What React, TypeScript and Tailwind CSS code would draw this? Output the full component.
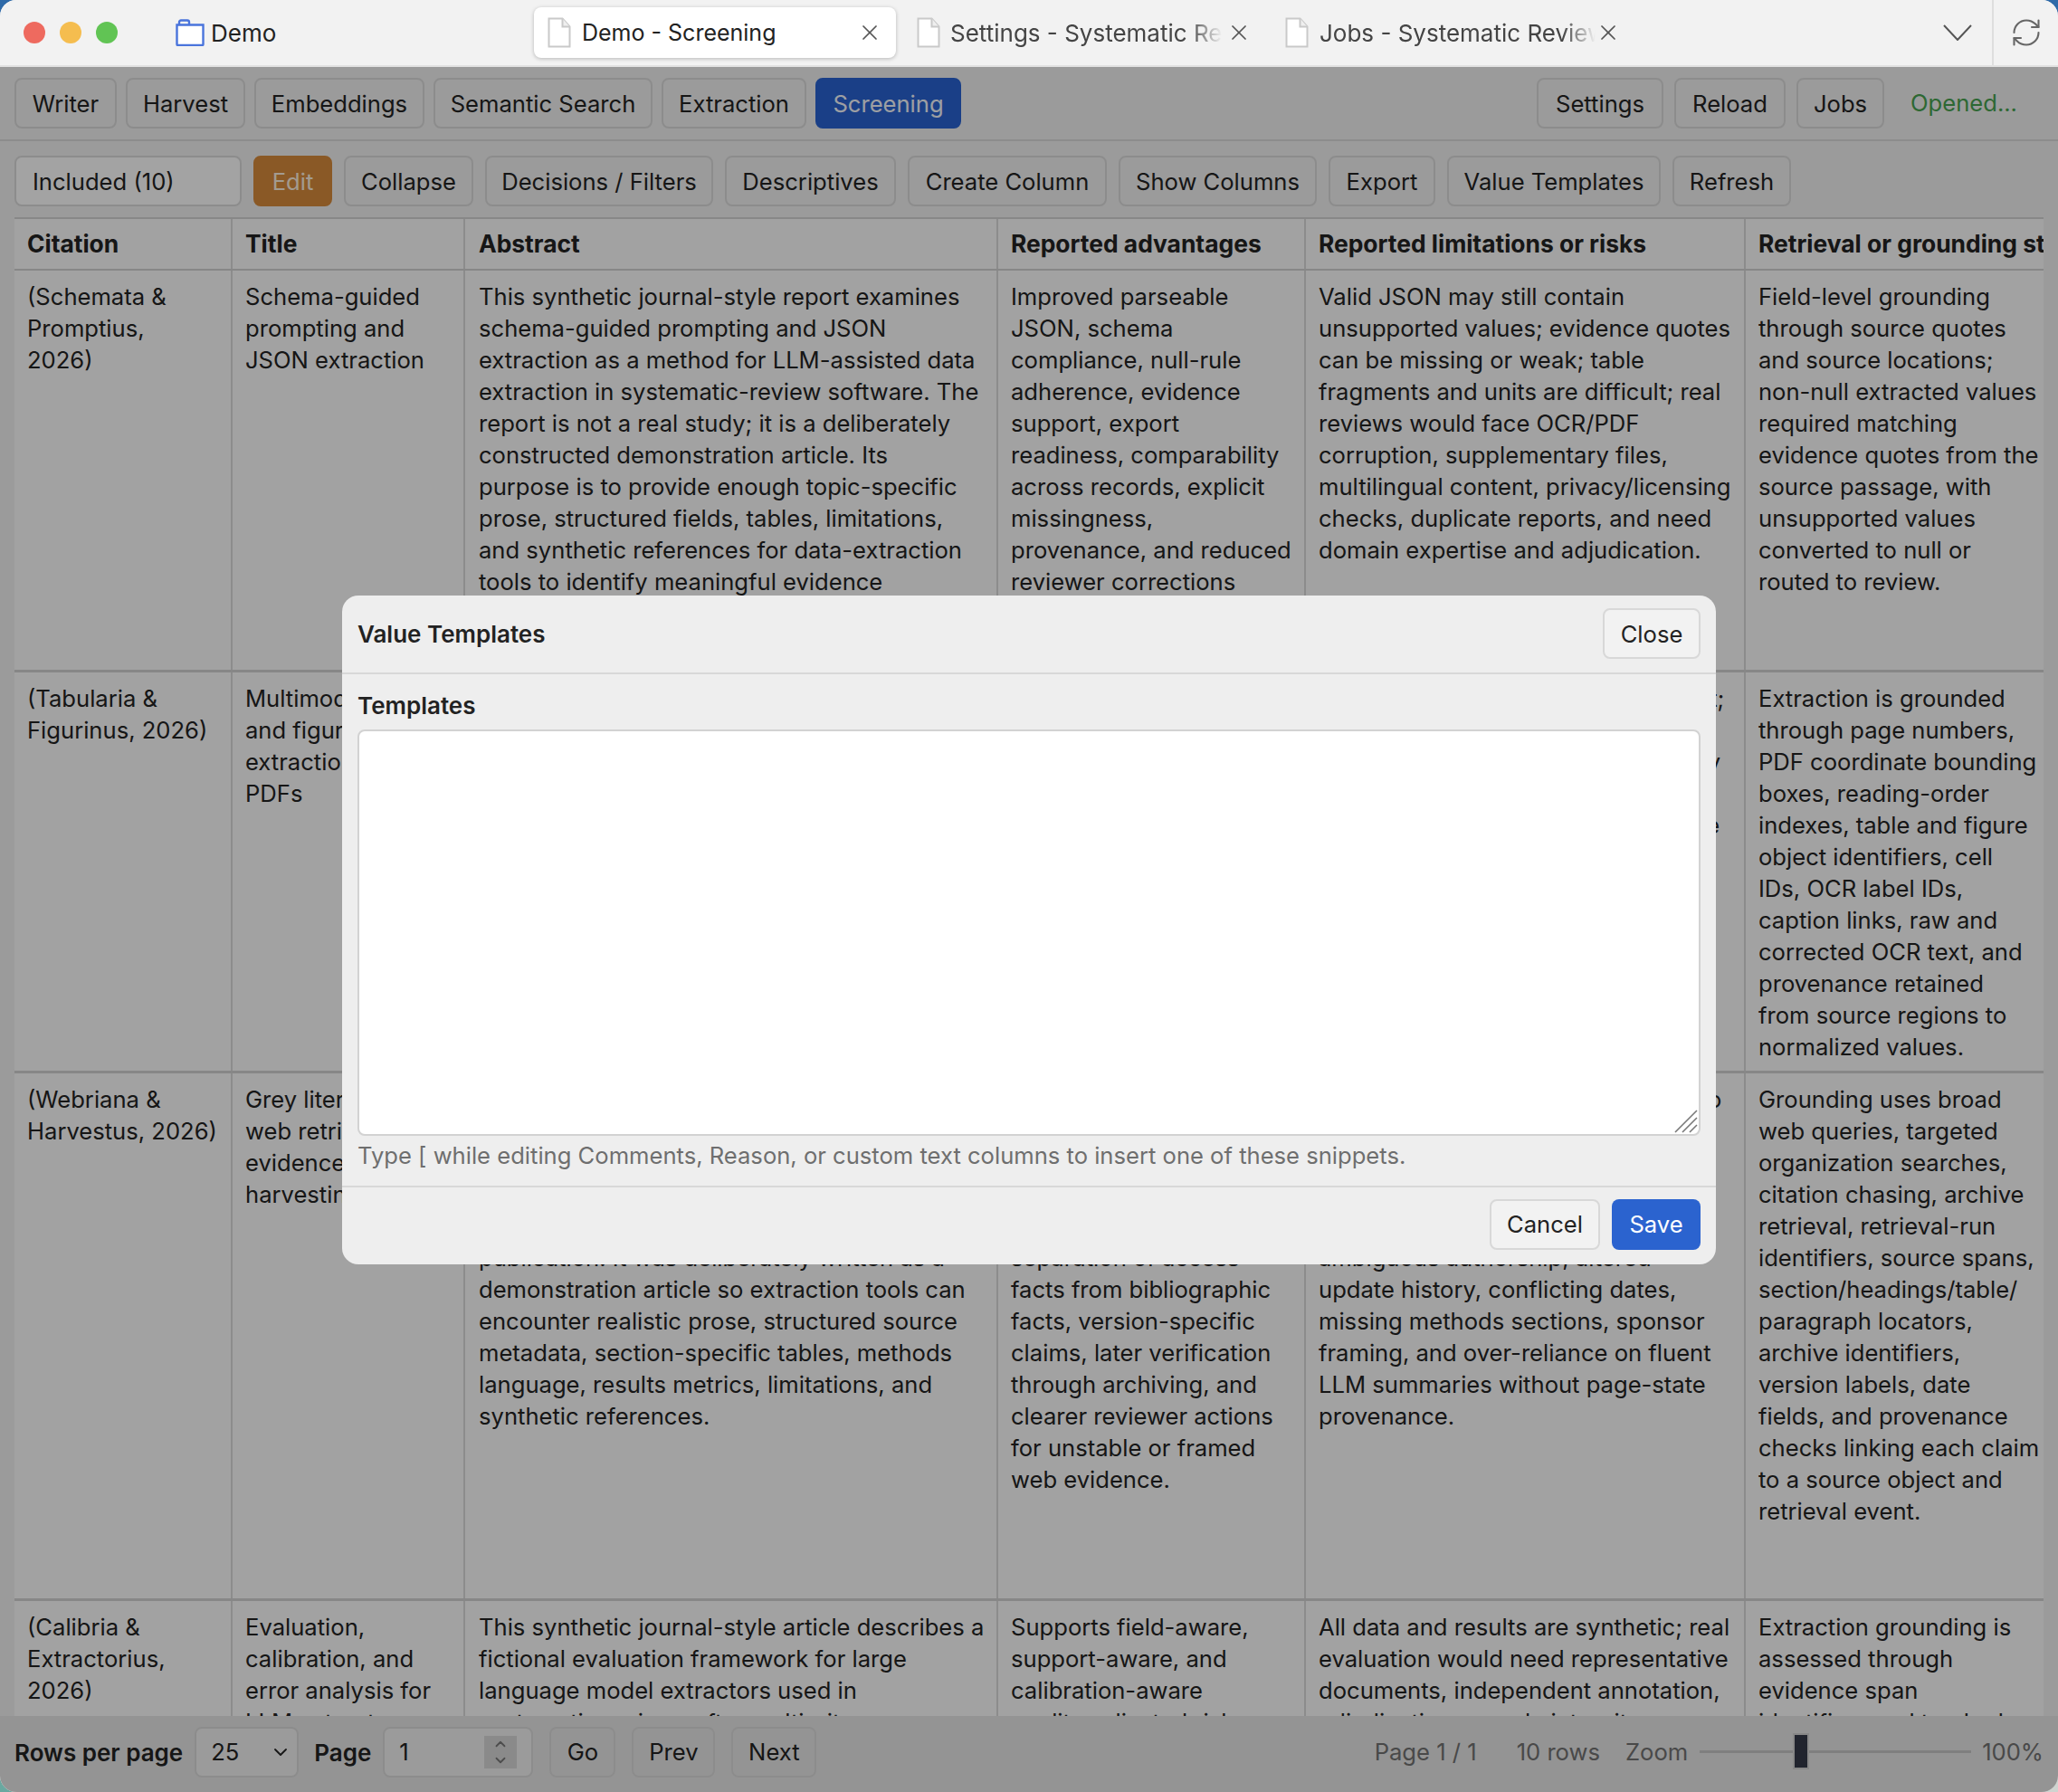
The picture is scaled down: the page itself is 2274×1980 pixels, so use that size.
import React from 'react';
import { RefreshCw, X, ChevronDown, ChevronUp } from 'lucide-react';

const FONT = "font-['Inter','Noto_Sans',sans-serif]";

type CellRow = { height: string; cells: string[] };

const columns = ['Citation', 'Title', 'Abstract', 'Reported advantages', 'Reported limitations or risks', 'Retrieval or grounding strategy'];

const rows: CellRow[] = [
  {
    height: 'h-[444px]',
    cells: [
      '(Schemata &\nPromptius,\n2026)',
      'Schema-guided\nprompting and\nJSON extraction',
      'This synthetic journal-style report examines\nschema-guided prompting and JSON\nextraction as a method for LLM-assisted data\nextraction in systematic-review software. The\nreport is not a real study; it is a deliberately\nconstructed demonstration article. Its\npurpose is to provide enough topic-specific\nprose, structured fields, tables, limitations,\nand synthetic references for data-extraction\ntools to identify meaningful evidence\nspans.',
      'Improved parseable\nJSON, schema\ncompliance, null-rule\nadherence, evidence\nsupport, export\nreadiness, comparability\nacross records, explicit\nmissingness,\nprovenance, and reduced\nreviewer corrections',
      'Valid JSON may still contain\nunsupported values; evidence quotes\ncan be missing or weak; table\nfragments and units are difficult; real\nreviews would face OCR/PDF\ncorruption, supplementary files,\nmultilingual content, privacy/licensing\nchecks, duplicate reports, and need\ndomain expertise and adjudication.',
      'Field-level grounding\nthrough source quotes\nand source locations;\nnon-null extracted values\nrequired matching\nevidence quotes from the\nsource passage, with\nunsupported values\nconverted to null or\nrouted to review.',
    ],
  },
  {
    height: 'h-[443px]',
    cells: [
      '(Tabularia &\nFigurinus, 2026)',
      'Multimodal table\nand figure\nextraction from\nPDFs',
      'This synthetic report examines multimodal\nparsing of tables and figures from PDF\nfiles for evidence extraction in reviews.',
      'Better recovery of table\ncells, figure values and\ncaption links across\nscanned documents',
      'Small figure labels and captions drift;\nmerged cells and OCR noise remain;\nvalues read off charts are only partly\ncorrect, and parsers can disagree;\nreviewers must check each full page',
      'Extraction is grounded\nthrough page numbers,\nPDF coordinate bounding\nboxes, reading-order\nindexes, table and figure\nobject identifiers, cell\nIDs, OCR label IDs,\ncaption links, raw and\ncorrected OCR text, and\nprovenance retained\nfrom source regions to\nnormalized values.',
    ],
  },
  {
    height: 'h-[583px]',
    cells: [
      '(Webriana &\nHarvestus, 2026)',
      'Grey literature,\nweb retrieval, and\nevidence\nharvesting',
      'This synthetic report examines grey literature\nand web retrieval for evidence harvesting in\nsystematic-review software. The report is a\nfictional item and not a real study or an\nofficial document, and it is not a genuine\npublication. It was deliberately written as a\ndemonstration article so extraction tools can\nencounter realistic prose, structured source\nmetadata, section-specific tables, methods\nlanguage, results metrics, limitations, and\nsynthetic references.',
      'Broader coverage of\nunpublished reports,\nfaster discovery, and\nclearer source trails,\nwith better reviewer\nseparation of access\nfacts from bibliographic\nfacts, version-specific\nclaims, later verification\nthrough archiving, and\nclearer reviewer actions\nfor unstable or framed\nweb evidence.',
      'Web sources change and are hard to\nkeep; snapshots are partial or non-\ncanonical versions can be mistaken\nlink rot, paywalls, redirects, and\nmirrored pages with little context,\nambiguous authorship, altered\nupdate history, conflicting dates,\nmissing methods sections, sponsor\nframing, and over-reliance on fluent\nLLM summaries without page-state\nprovenance.',
      'Grounding uses broad\nweb queries, targeted\norganization searches,\ncitation chasing, archive\nretrieval, retrieval-run\nidentifiers, source spans,\nsection/headings/table/\nparagraph locators,\narchive identifiers,\nversion labels, date\nfields, and provenance\nchecks linking each claim\nto a source object and\nretrieval event.',
    ],
  },
  {
    height: 'h-[200px]',
    cells: [
      '(Calibria &\nExtractorius,\n2026)',
      'Evaluation,\ncalibration, and\nerror analysis for\nLLM extractors',
      'This synthetic journal-style article describes a\nfictional evaluation framework for large\nlanguage model extractors used in\nsystematic reviews after multi-site',
      'Supports field-aware,\nsupport-aware, and\ncalibration-aware\nquality-adjusted risk',
      'All data and results are synthetic; real\nevaluation would need representative\ndocuments, independent annotation,\nadjudication, sample integrity',
      'Extraction grounding is\nassessed through\nevidence span\nidentifiers and tracked',
    ],
  },
];

const colWidths = ['w-[241px]', 'w-[257px]', 'w-[589px]', 'w-[340px]', 'w-[486px]', 'w-[340px]'];
const colPadding = ['px-[14px]', 'px-[14px]', 'pl-[15px] pr-[13px]', 'px-[14px]', 'px-[14px]', 'px-[14px]'];

function Btn({ w, children, tone = 'plain' }: { w: string; children: React.ReactNode; tone?: 'plain' | 'blue' | 'orange' }) {
  const toneClass =
    tone === 'blue'
      ? 'bg-[#2862d0] border-[#2862d0] text-[#f2f5fb]'
      : tone === 'orange'
        ? 'bg-[#d5893b] border-[#d5893b] text-[#fbeedd]'
        : 'bg-[#eeeeee] border-[#d8d8d8] text-[#222222]';
  return (
    <button className={`${w} h-14 shrink-0 rounded-lg border-2 pt-[1px] text-[25.6px] leading-none whitespace-nowrap ${toneClass}`}>
      {children}
    </button>
  );
}

function DocIcon() {
  return (
    <svg width="26" height="34" viewBox="0 0 26 34" className="shrink-0">
      <path d="M1.5 1.5h15l8 9v22h-23z" fill="#ffffff" stroke="#c9c9c9" strokeWidth="2" />
      <path d="M16.5 1.5v9h8" fill="#efefef" stroke="#c9c9c9" strokeWidth="2" />
    </svg>
  );
}

function FolderIcon() {
  return (
    <svg width="32" height="30" viewBox="0 0 32 30" className="shrink-0">
      <path d="M1.5 6.5h29v21.5a1 1 0 0 1-1 1h-27a1 1 0 0 1-1-1z" fill="#ffffff" stroke="#4a74dc" strokeWidth="2.4" />
      <path d="M4 6.5v-3a2 2 0 0 1 2-2h7a2 2 0 0 1 2 2v3" fill="none" stroke="#4a74dc" strokeWidth="2.4" />
    </svg>
  );
}

function TitleBar() {
  return (
    <div className="flex h-[74px] shrink-0 items-center border-b-2 border-[#e2e2e2] bg-[#f2f2f2] pl-[26px]">
      <div className="flex gap-4">
        <span className="h-6 w-6 rounded-full bg-[#ee6a5f]" />
        <span className="h-6 w-6 rounded-full bg-[#f5bd4f]" />
        <span className="h-6 w-6 rounded-full bg-[#61c454]" />
      </div>
      <div className="ml-[64px] flex w-[396px] items-center gap-[7px] text-[26px] text-[#222222]">
        <FolderIcon />
        Demo
      </div>
      <div className="flex h-14 w-[400px] items-center rounded-lg bg-white pl-[15px] text-[25px] text-[#222222] shadow-[0_1px_4px_rgba(0,0,0,0.25)]">
        <DocIcon />
        <span className="ml-3 w-[304px] pt-[2px] whitespace-nowrap">Demo - Screening</span>
        <X className="h-7 w-7 text-[#555555]" strokeWidth={1.5} />
      </div>
      <div className="ml-[23px] flex items-center text-[26px] text-[#444444]">
        <DocIcon />
        <span className="ml-[11px] w-[300px] overflow-hidden whitespace-nowrap [mask-image:linear-gradient(to_right,black_88%,transparent)]">
          Settings - Systematic Review
        </span>
        <X className="ml-[5px] h-7 w-7 text-[#555555]" strokeWidth={1.5} />
      </div>
      <div className="ml-[37px] flex items-center text-[26px] text-[#444444]">
        <DocIcon />
        <span className="ml-3 w-[305px] overflow-hidden whitespace-nowrap [mask-image:linear-gradient(to_right,black_88%,transparent)]">
          Jobs - Systematic Review
        </span>
        <X className="h-7 w-7 text-[#555555]" strokeWidth={1.5} />
      </div>
      <div className="ml-auto flex h-full items-center">
        <svg width="32" height="18" viewBox="0 0 32 18" className="mr-[22px]">
          <path d="M1 1l15 16L31 1" fill="none" stroke="#555555" strokeWidth="2" />
        </svg>
        <div className="flex h-full w-[73px] items-center justify-center border-l-2 border-[#dedede]">
          <RefreshCw className="h-9 w-9 text-[#666666]" strokeWidth={1.4} />
        </div>
      </div>
    </div>
  );
}

function Table() {
  return (
    <div className="mx-4 min-h-0 flex-1 overflow-hidden border-t-2 border-[#d0d0d0] bg-[#f9f9f9] text-[25.6px] leading-[35px] text-[#222222]">
      <div className="flex h-[57px] w-[2400px] border-b-2 border-[#d0d0d0] text-[26.4px] font-bold">
        {columns.map((c, i) => (
          <div key={c} className={`${colWidths[i]} ${colPadding[i]} shrink-0 border-r-2 border-[#d8d8d8] pt-[10px] whitespace-nowrap`}>
            {c}
          </div>
        ))}
      </div>
      {rows.map((r) => (
        <div key={r.cells[0]} className={`flex ${r.height} w-[2400px] border-b-[3px] border-[#d0d0d0]`}>
          {r.cells.map((text, i) => (
            <div key={i} className={`${colWidths[i]} ${colPadding[i]} shrink-0 overflow-hidden border-r-2 border-[#d8d8d8] pt-[11px] whitespace-pre`}>
              {text}
            </div>
          ))}
        </div>
      ))}
    </div>
  );
}

function Footer() {
  return (
    <div className="flex h-[84px] shrink-0 items-center gap-[13px] bg-[#e4e4e4] pb-[4px] pl-4 text-[25.6px] text-[#222222]">
      <span className="text-[26px] font-semibold whitespace-nowrap">Rows per page</span>
      <div className="flex h-14 w-[115px] items-center justify-between rounded-lg border-2 border-[#d8d8d8] bg-[#eeeeee] pl-4 pr-[6px]">
        25
        <ChevronDown className="h-6 w-6" strokeWidth={1.8} />
      </div>
      <span className="ml-1 text-[26px] font-semibold">Page</span>
      <div className="flex h-14 w-[166px] items-center justify-between rounded-lg border-2 border-[#d8d8d8] bg-[#eeeeee] pl-4 pr-4">
        1
        <div className="flex h-9 w-9 flex-col items-center justify-center bg-[#d4d4d4] text-[#777777]">
          <ChevronUp className="h-[18px] w-[18px]" strokeWidth={2.4} />
          <ChevronDown className="h-[18px] w-[18px]" strokeWidth={2.4} />
        </div>
      </div>
      <div className="ml-[5px] flex gap-[18px]">
        <button className="h-14 w-[73px] rounded-lg border-2 border-[#d8d8d8] bg-[#e4e4e4]">Go</button>
        <button className="h-14 w-[92px] rounded-lg border-2 border-[#d8d8d8] bg-[#e4e4e4]">Prev</button>
        <button className="h-14 w-[94px] rounded-lg border-2 border-[#d8d8d8] bg-[#e4e4e4]">Next</button>
      </div>
      <div className="ml-auto flex items-center pr-4 text-[#707070]">
        <span className="whitespace-nowrap">Page 1 / 1</span>
        <span className="ml-[44px] whitespace-nowrap">10 rows</span>
        <span className="ml-7">Zoom</span>
        <div className="relative ml-[13px] h-[3px] w-[300px] bg-[#c4c4c4]">
          <div className="absolute top-[-17px] left-[105px] h-9 w-[14px] bg-[#343848] outline-[2px] outline-[#d0d0d0]" />
        </div>
        <span className="ml-3">100%</span>
      </div>
    </div>
  );
}

function ValueTemplatesModal() {
  return (
    <div className="absolute inset-x-0 top-[74px] bottom-0 flex items-center justify-center bg-black/35">
      <div className="flex h-[739px] w-[1518px] flex-col rounded-[18px] bg-[#eeeeee] text-[25.6px] leading-[35px] text-[#222222]">
        <div className="flex h-[87px] shrink-0 items-center justify-between border-b-2 border-[#d8d8d8] px-[17px]">
          <span className="text-[26px] font-semibold">Value Templates</span>
          <button className="h-14 w-[108px] rounded-lg border-2 border-[#d8d8d8] bg-[#f2f2f2]">Close</button>
        </div>
        <div className="flex-1 border-b-2 border-[#d8d8d8] px-[17px] pt-[17px]">
          <div className="text-[26px] font-semibold">Templates</div>
          <div className="relative mt-[9px]">
            <textarea className="block h-[449px] w-full resize-none rounded-lg border-2 border-[#d2d2d2] bg-white outline-none" />
            <svg width="26" height="26" viewBox="0 0 26 26" className="absolute right-[3px] bottom-[3px]">
              <path d="M1 25L25 1M9 25L25 9M17 25L25 17" stroke="#777777" strokeWidth="1.6" fill="none" />
            </svg>
          </div>
          <div className="mt-[4px] text-[#6e6e6e]">
            Type [ while editing Comments, Reason, or custom text columns to insert one of these snippets.
          </div>
        </div>
        <div className="flex h-[85px] shrink-0 justify-end gap-[13px] px-[17px] pt-[13px]">
          <button className="h-14 w-[122px] rounded-lg border-2 border-[#d8d8d8] bg-[#f2f2f2]">Cancel</button>
          <button className="h-14 w-[98px] rounded-lg bg-[#2b63cf] text-white">Save</button>
        </div>
      </div>
    </div>
  );
}

export default function App() {
  return (
    <div className={`h-[1980px] w-[2274px] bg-[linear-gradient(to_bottom,#2f6aa8_50%,transparent_50%),linear-gradient(to_right,#6aa8a0,#cfd4d0)] ${FONT}`}>
      <div className="relative flex h-full flex-col overflow-hidden rounded-[18px] bg-[#eeeeee]">
        <TitleBar />
        <div className="flex h-[82px] shrink-0 items-start justify-between border-b-2 border-[#d8d8d8] px-4 pt-3">
          <div className="flex gap-[10px]">
            <Btn w="w-[113px]">Writer</Btn>
            <Btn w="w-[132px]">Harvest</Btn>
            <Btn w="w-[188px]">Embeddings</Btn>
            <Btn w="w-[242px]">Semantic Search</Btn>
            <Btn w="w-[160px]">Extraction</Btn>
            <Btn w="w-[161px]" tone="blue">Screening</Btn>
          </div>
          <div className="flex items-center gap-3 pr-[29px]">
            <Btn w="w-[140px]">Settings</Btn>
            <Btn w="w-[123px]">Reload</Btn>
            <Btn w="w-[97px]">Jobs</Btn>
            <span className="ml-[17px] text-[25.6px] text-[#46a04f]">Opened...</span>
          </div>
        </div>
        <div className="flex shrink-0 gap-[13px] px-4 pt-4 pb-3">
          <div className="flex h-14 w-[251px] items-center rounded-lg border-2 border-[#d8d8d8] bg-[#fbfbfb] pt-[2px] pl-[18px] text-[25.6px] text-[#222222]">
            Included (10)
          </div>
          <Btn w="w-[87px]" tone="orange">Edit</Btn>
          <Btn w="w-[143px]">Collapse</Btn>
          <Btn w="w-[252px]">Decisions / Filters</Btn>
          <Btn w="w-[189px]">Descriptives</Btn>
          <Btn w="w-[220px]">Create Column</Btn>
          <Btn w="w-[219px]">Show Columns</Btn>
          <Btn w="w-[118px]">Export</Btn>
          <Btn w="w-[236px]">Value Templates</Btn>
          <Btn w="w-[131px]">Refresh</Btn>
        </div>
        <Table />
        <Footer />
        <ValueTemplatesModal />
      </div>
    </div>
  );
}
